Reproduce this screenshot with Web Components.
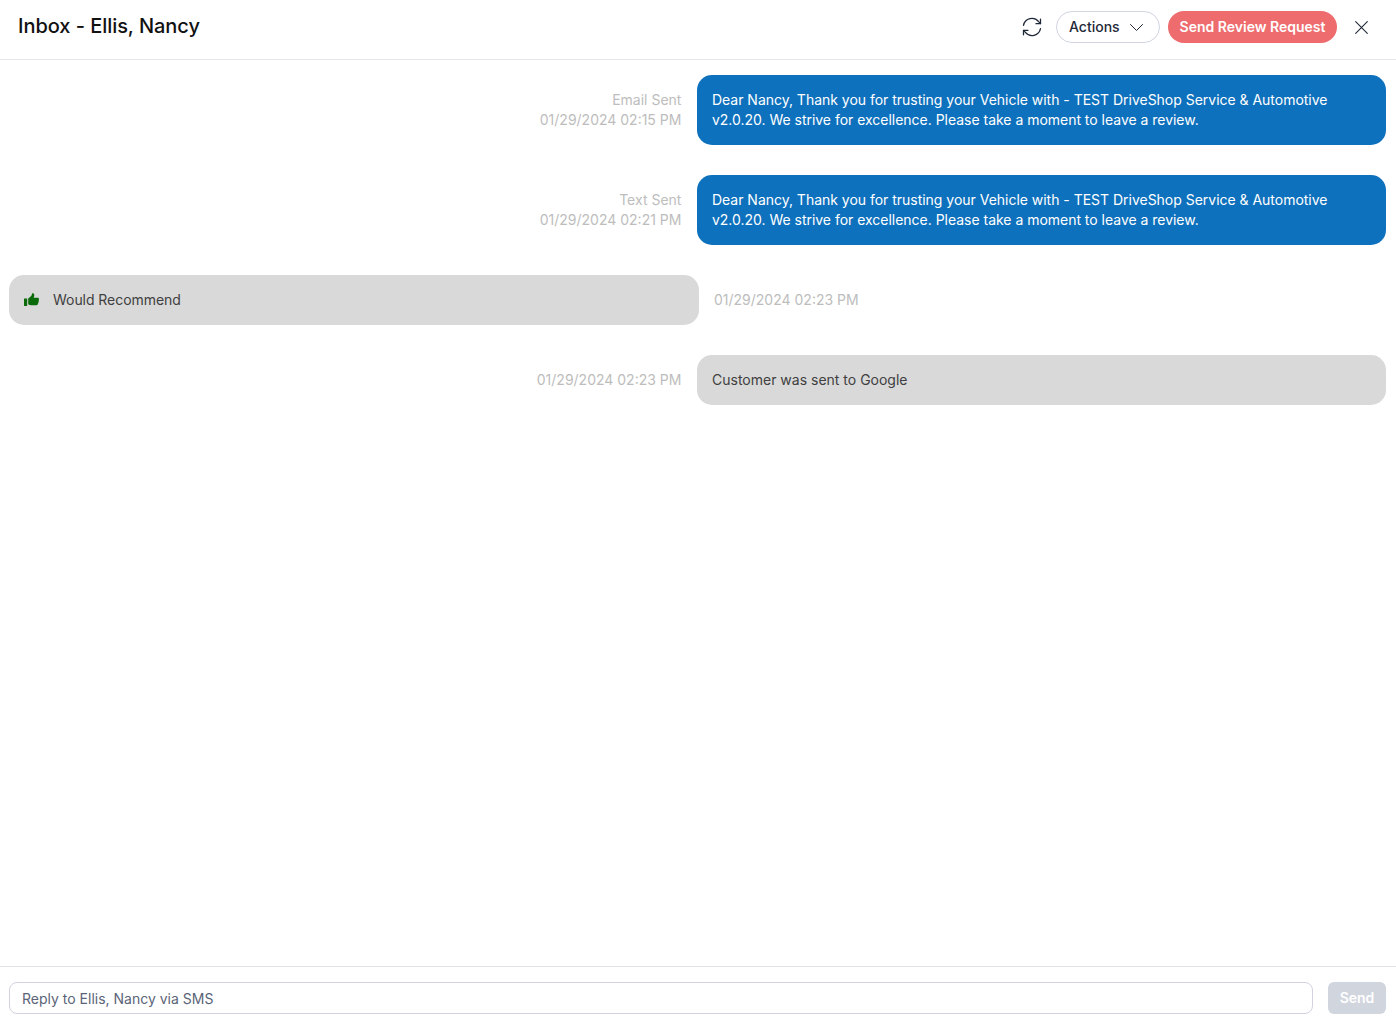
<!DOCTYPE html>
<html lang="en"><head><meta charset="utf-8"><title>Inbox</title>
<style>html,body{margin:0;background:#fff;font-family:Inter,"Liberation Sans",sans-serif}</style></head>
<body>
<inbox-app>
  <inbox-header slot="header" title-text="Inbox - Ellis, Nancy"></inbox-header>
  <chat-message side="out" tone="blue"><span slot="meta">Email Sent<br>01/29/2024 02:15 PM</span>Dear Nancy, Thank you for trusting your Vehicle with - TEST DriveShop Service &amp; Automotive v2.0.20. We strive for excellence. Please take a moment to leave a review.</chat-message>
  <chat-message side="out" tone="blue"><span slot="meta">Text Sent<br>01/29/2024 02:21 PM</span>Dear Nancy, Thank you for trusting your Vehicle with - TEST DriveShop Service &amp; Automotive v2.0.20. We strive for excellence. Please take a moment to leave a review.</chat-message>
  <chat-message side="in" tone="grey" thumb><span slot="meta">01/29/2024 02:23 PM</span>Would Recommend</chat-message>
  <chat-message side="out" tone="grey"><span slot="meta">01/29/2024 02:23 PM</span>Customer was sent to Google</chat-message>
  <reply-bar slot="footer" placeholder="Reply to Ellis, Nancy via SMS"></reply-bar>
</inbox-app>
<script>
const def=(name,html,init)=>customElements.define(name,class extends HTMLElement{
  constructor(){super();this.attachShadow({mode:'open'}).innerHTML=html;}
  connectedCallback(){init&&init(this);}
});
def('inbox-app',`<style>
:host{display:flex;flex-direction:column;height:1025px;overflow:hidden}
.main{flex:1;display:flex;flex-direction:column;gap:30px;padding:15px 10px 0 9px;min-height:0}
</style><slot name="header"></slot><div class="main"><slot></slot></div><slot name="footer"></slot>`);
def('inbox-header',`<style>
:host{display:flex;align-items:center;border-bottom:1px solid #e5e7eb;padding:0 28px 5px 18px;box-sizing:content-box;height:54px;color:#111}
h1{margin:0 0 2px;font:500 20px/24px Inter,"Liberation Sans",sans-serif;letter-spacing:-.05px;flex:1;color:#111}
.sync{width:20px;height:20px;display:block;margin:0 14px 1px 0}
.actions{box-sizing:border-box;height:32px;width:104px;border:1px solid #d1d5e0;border-radius:16px;display:flex;align-items:center;padding:0 16px 0 12px;justify-content:space-between;font:500 14px/20px Inter,"Liberation Sans",sans-serif;color:#1f2937;margin-right:8px}
.send{box-sizing:border-box;height:32px;width:169px;border-radius:16px;background:#ee6b6e;color:#fff;display:flex;align-items:center;justify-content:center;font:600 14px/20px Inter,"Liberation Sans",sans-serif;margin-right:18px}
svg{display:block;fill:none;stroke:#1f2937}
</style>
<h1 id="t"></h1>
<svg class="sync" viewBox="0 0 20 20" stroke-width="1.3" stroke-linecap="round" stroke-linejoin="round"><path d="M1.5 8.3A8.6 8.6 0 0 1 16.6 4.6L18.4 6.6"/><path d="M18.5 2.2V6.7H14"/><path d="M18.5 11.7A8.6 8.6 0 0 1 3.4 15.4L1.6 13.4"/><path d="M1.5 17.8V13.3H6"/></svg>
<div class="actions">Actions<svg width="13" height="7" viewBox="0 0 13 7" stroke-width="1" stroke-linecap="round" stroke-linejoin="round"><path d="M.5.5l6 6 6-6"/></svg></div>
<div class="send">Send Review Request</div>
<svg width="13" height="13" viewBox="0 0 13 13" stroke-width="1.1" stroke-linecap="round"><path d="M.7.7l11.6 11.6M12.3.7L.7 12.3"/></svg>`,
el=>{el.shadowRoot.getElementById('t').textContent=el.getAttribute('title-text')});
def('chat-message',`<style>
:host{display:flex;gap:15px;align-items:center;font:400 14px/20px Inter,"Liberation Sans",sans-serif}
:host([side=out]){justify-content:flex-end}
:host([side=in]){flex-direction:row-reverse;justify-content:flex-end}
.meta{color:#bdbdbd;text-align:right;white-space:nowrap}
:host([side=out]) .meta{padding-right:.6px}
:host([side=in]) .meta{text-align:left}
.bubble{box-sizing:border-box;width:689px;flex:none;border-radius:15px;padding:15px;display:flex;align-items:center}
:host([side=in]) .bubble{width:690px}
:host([tone=blue]) .bubble{background:#0e71bd;color:#fff;letter-spacing:-.02px}
:host([tone=grey]) .bubble{background:#d9d9d9;color:#404040}
:host([thumb]) .bubble{letter-spacing:-.05px}
svg{display:none;width:15px;height:14px;margin-right:14px;flex:none}
:host([thumb]) svg{display:block}
</style><div class="meta"><slot name="meta"></slot></div>
<div class="bubble"><svg viewBox="0 0 15 14" fill="#0b6b0b"><rect x="0" y="5.4" width="3.2" height="7.6" rx=".4"/><path d="M4.2 5.6 7.2 3C7.8 2.2 7.9 1.4 8 .5 9 .1 10.2.6 10.3 2c.1 1-.3 1.9-.7 2.7h3.9c1.2 0 1.8 1 1.4 1.9-.2.5-.2.7-.1 1.1.1.6-.1 1-.4 1.3.1.7 0 1.2-.5 1.6.1.9-.5 1.6-1.4 1.6H7.2c-1.2 0-2.1-.4-3-.9Z"/></svg><div><slot></slot></div></div>`);
def('reply-bar',`<style>
:host{display:flex;gap:15px;border-top:1px solid #e0e0e6;padding:15px 10px 11px 9px;font:400 14px/20px Inter,"Liberation Sans",sans-serif}
.field{flex:1;box-sizing:border-box;height:32px;border:1px solid #d2d2e0;border-radius:8px;padding:2px 12px 0;display:flex;align-items:center;color:#5b6478}
.btn{box-sizing:border-box;width:58px;height:32px;border-radius:6px;background:#d1d5de;color:#fff;font-weight:600;display:flex;align-items:center;justify-content:center}
</style><div class="field" id="p"></div><div class="btn">Send</div>`,
el=>{el.shadowRoot.getElementById('p').textContent=el.getAttribute('placeholder')});
</script>
</body></html>
